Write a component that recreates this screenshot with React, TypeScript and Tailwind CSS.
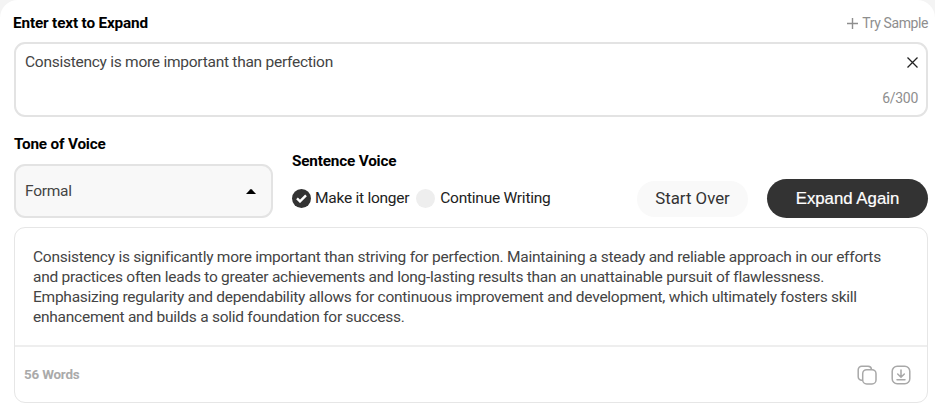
import { useState } from "react";

const result =
  "Consistency is significantly more important than striving for perfection. Maintaining a steady and reliable approach in our efforts and practices often leads to greater achievements and long-lasting results than an unattainable pursuit of flawlessness. Emphasizing regularity and dependability allows for continuous improvement and development, which ultimately fosters skill enhancement and builds a solid foundation for success.";

function CopyIcon() {
  return (
    <svg width="20" height="20" viewBox="0 0 20 20" fill="none" stroke="#a8a8a8" strokeWidth="1.5">
      <rect x="5.7" y="4.7" width="13.3" height="14.3" rx="4" />
      <path d="M5.5 15.2h-.8a3.5 3.5 0 0 1-3.5-3.5V4.7a3.5 3.5 0 0 1 3.5-3.5h6.4a3.5 3.5 0 0 1 3.4 3.3" />
    </svg>
  );
}

function DownloadIcon() {
  return (
    <svg width="20" height="20" viewBox="0 0 20 20" fill="none" stroke="#a8a8a8" strokeWidth="1.5" strokeLinecap="round">
      <rect x="1.2" y="1.2" width="17.6" height="17.6" rx="5" />
      <path d="M10 5v7M6.7 9l3.3 3.2L13.3 9M6 14.8h8" />
    </svg>
  );
}

export default function App() {
  const [text, setText] = useState("Consistency is more important than perfection");
  const [mode, setMode] = useState("longer");

  return (
    <div className="bg-[#f4f4f4] font-['Roboto',sans-serif]">
      <main className="h-[412px] rounded-t-[18px] bg-white pt-[13px] pr-[7px] pl-[14px] text-black">
        {/* Header */}
        <div className="flex h-5 items-center justify-between">
          <h2 className="-ml-px text-[15.3px] font-bold tracking-[-0.15px]">Enter text to Expand</h2>
          <button type="button" className="flex items-center gap-1 text-[14px] tracking-[-0.4px] text-[#8e8e8e]">
            <svg width="11" height="11" viewBox="0 0 11 11" stroke="currentColor" strokeWidth="1.4">
              <path d="M5.5 0v11M0 5.5h11" />
            </svg>
            Try Sample
          </button>
        </div>

        {/* Input box */}
        <div className="mt-[9px] flex h-[75px] justify-between rounded-[11px] border-2 border-[#e3e3e3] pt-2 pr-2 pb-2 pl-[9px]">
          <textarea
            value={text}
            onChange={(e) => setText(e.target.value)}
            className="h-full grow resize-none overflow-hidden text-[15.5px] leading-5 tracking-[-0.26px] text-[#444] outline-none"
          />
          <div className="flex flex-col items-end justify-between">
            <button type="button" aria-label="Clear" onClick={() => setText("")} className="mt-1">
              <svg width="11" height="11" viewBox="0 0 11 11" stroke="#222" strokeWidth="1.3" className="mt-px">
                <path d="M.5.5l10 10M10.5.5l-10 10" />
              </svg>
            </button>
            <span className="text-[14px] leading-[18px] tracking-[-0.3px] text-[#8e8e8e]">6/300</span>
          </div>
        </div>

        {/* Options */}
        <div className="mt-[17px] flex h-[84px]">
          <div className="w-[259px]">
            <h3 className="text-[15.3px] leading-5 font-bold tracking-[-0.18px]">Tone of Voice</h3>
            <button
              type="button"
              className="mt-[10px] flex h-[54px] w-full items-center justify-between rounded-[11px] border-2 border-[#e3e3e3] bg-[#f8f8f8] pr-[15px] pl-[9px] text-[15.5px] leading-5 tracking-[-0.25px] text-[#444]"
            >
              Formal
              <svg width="10" height="5" viewBox="0 0 10 5" fill="#000">
                <path d="M0 5l4.2-4.5q.8-.8 1.6 0L10 5z" />
              </svg>
            </button>
          </div>

          <div className="ml-[19px] pt-[17px]">
            <h3 className="text-[15.3px] leading-5 font-bold tracking-[-0.18px]">Sentence Voice</h3>
            <div className="mt-[17px] flex h-5 items-center text-[15.5px] leading-5 tracking-[-0.25px] text-[#222]">
              <button type="button" onClick={() => setMode("longer")} className="flex items-center gap-1">
                <Dot checked={mode === "longer"} />
                Make it longer
              </button>
              <button type="button" onClick={() => setMode("continue")} className="ml-[7px] flex items-center gap-[5px]">
                <Dot checked={mode === "continue"} />
                Continue Writing
              </button>
            </div>
          </div>

          <div className="ml-auto flex items-end gap-[19px]">
            <button type="button" className="mb-px h-9 w-[111px] rounded-full bg-[#f9f9f9] text-[16.8px] text-[#333]">
              Start Over
            </button>
            <button
              type="button"
              className="h-[39px] w-[161px] rounded-full bg-[#333] font-['Liberation_Sans',sans-serif] text-[16.8px] text-white [-webkit-text-stroke:0.2px_#fff]"
            >
              Expand Again
            </button>
          </div>
        </div>

        {/* Result */}
        <section className="mt-[9px] flex h-[176px] flex-col rounded-[11px] border border-[#e6e6e6]">
          <p className="h-[119px] border-b-2 border-[#eeeeee] pt-[19px] pr-7 pl-[18px] text-[15.5px] leading-[20px] tracking-[-0.25px] text-[#444]">
            {result}
          </p>
          <div className="flex grow items-center justify-between pr-4 pl-[9px]">
            <span className="text-[13.4px] leading-4 font-bold tracking-[-0.18px] text-[#aaa]">56 Words</span>
            <div className="flex gap-[14px]">
              <CopyIcon />
              <DownloadIcon />
            </div>
          </div>
        </section>
      </main>
    </div>
  );
}

function Dot({ checked }: { checked: boolean }) {
  if (!checked) return <span className="size-[19px] rounded-full bg-[#eee]" />;
  return (
    <span className="flex size-[19px] items-center justify-center rounded-full bg-[#333]">
      <svg width="11" height="9" viewBox="0 0 11 9" fill="none" stroke="#fff" strokeWidth="2.4">
        <path d="M1 4.4l3 3L10 1.3" />
      </svg>
    </span>
  );
}
